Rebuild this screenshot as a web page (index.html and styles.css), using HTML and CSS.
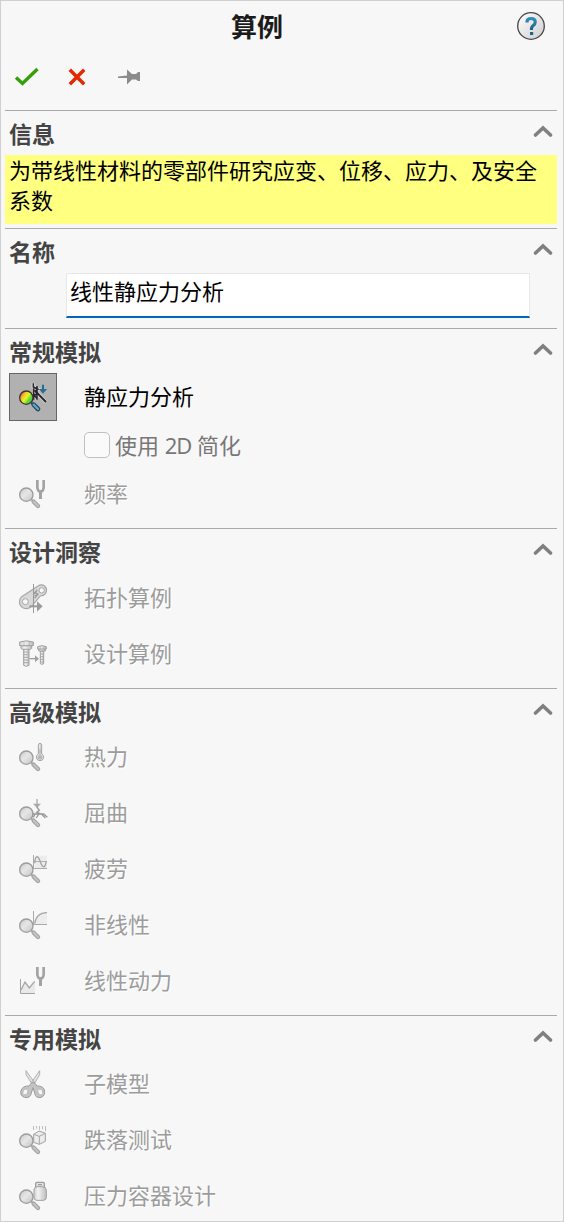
FILE: index.html
```
<!DOCTYPE html>
<html lang="zh-CN">
<head>
<meta charset="utf-8">
<title>算例</title>
<link rel="stylesheet" href="styles.css">
</head>
<body>
<svg class="defs" width="0" height="0" aria-hidden="true">
  <defs>
    <linearGradient id="glass" x1="0" y1="0" x2="1" y2="1"><stop offset="0" stop-color="#c8c8c8"/><stop offset=".45" stop-color="#e6e6e6"/><stop offset="1" stop-color="#c4c4c4"/></linearGradient>
    <linearGradient id="metal" x1="0" y1="0" x2="1" y2="0"><stop offset="0" stop-color="#d2d2d2"/><stop offset=".35" stop-color="#f2f2f2"/><stop offset="1" stop-color="#bdbdbd"/></linearGradient>
    <linearGradient id="rainbow" x1="0" y1=".15" x2="1" y2=".85"><stop offset=".05" stop-color="#f0503c"/><stop offset=".3" stop-color="#f5c62a"/><stop offset=".5" stop-color="#e6f52a"/><stop offset=".7" stop-color="#62dc2c"/><stop offset="1" stop-color="#2aa6a0"/></linearGradient>
    <linearGradient id="helpfill" x1="0" y1="0" x2="1" y2="1"><stop offset="0" stop-color="#fff"/><stop offset="1" stop-color="#cdcdcd"/></linearGradient>
    <linearGradient id="helpmark" x1="0" y1="0" x2="0" y2="1"><stop offset="0" stop-color="#2f8fbd"/><stop offset="1" stop-color="#1d5f80"/></linearGradient>
    <g id="magnifier">
      <path d="M37 59l6 6" stroke="#a0a0a0" stroke-width="6"/>
      <path d="M44 65L57 78" stroke="#a0a0a0" stroke-width="13" stroke-linecap="round"/>
      <path d="M44 65L57 78" stroke="#c2c2c2" stroke-width="7" stroke-linecap="round"/>
      <circle cx="22" cy="44" r="20" fill="url(#glass)" stroke="#9c9c9c" stroke-width="4"/>
    </g>
    <g id="fork" fill="none" stroke="#a3a3a3"><path d="M55 0V20Q55 34 64.500 34Q74 34 74 20V0" stroke-width="8"/><path d="M64.500 30V57" stroke-width="9"/></g>
    <symbol id="chevron" viewBox="0 0 20 14"><path d="M2.500 11L10 4L17.500 11" fill="none" stroke="#808080" stroke-width="3.600" stroke-linecap="round"/></symbol>
  </defs>
</svg>

<main class="panel">
  <header class="titlebar">
    <h1 class="title">算例</h1>
    <svg class="help" viewBox="0 0 28 28"><circle cx="14" cy="14" r="13.300" fill="url(#helpfill)" stroke="#454545" stroke-width="1.300"/><path d="M10 10.500V9.700Q10 6.500 14 6.500Q18.300 6.500 18.300 10Q18.300 12 16 13.800Q14.500 15 14.500 16.500V18" fill="none" stroke="url(#helpmark)" stroke-width="3.100"/><path d="M13 20h3.200v3H13z" fill="#1d6488"/></svg>
  </header>

  <div class="toolbar">
    <svg class="ok" viewBox="0 0 26 20"><path d="M2 10.500L8.500 16.500L23.500 2" fill="none" stroke="#36a00c" stroke-width="3.400"/></svg>
    <svg class="cancel" viewBox="0 0 18 18"><path d="M1.800 1.800L16.200 16.200M16.200 1.800L1.800 16.200" stroke="#e22900" stroke-width="3.500"/></svg>
    <svg class="pin" viewBox="0 0 22 16"><path d="M0 7.500L9 6.500V0.500L14 5H18L20 3H22V12H20L18 10.500H14L9 15.500V9H0z" fill="#8b8b8b"/></svg>
  </div>

  <section class="group group-info">
    <div class="group-head"><h2>信息</h2><svg class="chev"><use href="#chevron"/></svg></div>
    <p class="message">为带线性材料的零部件研究应变、位移、应力、及安全系数</p>
  </section>

  <section class="group group-name">
    <div class="group-head"><h2>名称</h2><svg class="chev"><use href="#chevron"/></svg></div>
    <div class="name-field">线性静应力分析</div>
  </section>

  <section class="group group-general">
    <div class="group-head"><h2>常规模拟</h2><svg class="chev"><use href="#chevron"/></svg></div>
    <div class="row active">
      <span class="icon-cell selected"><svg class="icon" viewBox="0 0 84 87">
        <path d="M43 1V12L57 19L48 23L56 33L44 35L55 48M52 27L81 57" fill="none" stroke="#d8d8d8" stroke-width="11"/>
        <path d="M43 1V12L57 19L48 23L56 33L44 35L55 48M44 16V50M54 9V50" fill="none" stroke="#29242c" stroke-width="4.500"/>
        <path d="M50 25L81 57" stroke="#29242c" stroke-width="6"/>
        <path d="M72 5V19" stroke="#286d92" stroke-width="6"/><path d="M60 18H84L72 32z" fill="#286d92"/>
        <path d="M37 59l6 6" stroke="#333" stroke-width="6"/>
        <path d="M44 65L57 78" stroke="#24465a" stroke-width="14" stroke-linecap="round"/><path d="M44 65L57 78" stroke="#5ea6c8" stroke-width="7" stroke-linecap="round"/>
        <circle cx="22" cy="44" r="20" fill="url(#rainbow)" stroke="#3d3534" stroke-width="4"/>
      </svg></span>
      <span class="label">静应力分析</span>
    </div>
    <div class="option"><span class="checkbox"></span><span class="option-label">使用 <span class="latin">2D</span> 简化</span></div>
    <div class="row">
      <span class="icon-cell"><svg class="icon" viewBox="0 0 84 87"><use href="#magnifier"/><use href="#fork"/></svg></span>
      <span class="label">频率</span>
    </div>
  </section>

  <section class="group group-insight">
    <div class="group-head"><h2>设计洞察</h2><svg class="chev"><use href="#chevron"/></svg></div>
    <div class="row tall">
      <span class="icon-cell"><svg class="icon" viewBox="0 0 84 87">
        <path d="M8 38L57 6Q67 -1 77 6Q87 17 79 29Q74 36 64 36L38 67Q28 77 13 72Q-1 65 2 49Q3 42 8 38z" fill="#d8d8d8" stroke="#a6a6a6" stroke-width="3.500"/>
        <circle cx="19" cy="53" r="9" fill="#f7f7f7" stroke="#a6a6a6" stroke-width="3"/>
        <circle cx="68" cy="19" r="8" fill="#f7f7f7" stroke="#a6a6a6" stroke-width="3"/>
        <path d="M44 30L55 18M47 42L58 29M49 26L56 31M47 34L53 35" fill="none" stroke="#999" stroke-width="4"/>
        <path d="M43.500 0V87" stroke="#999" stroke-width="3"/><path d="M31 67H56" stroke="#9b9b9b" stroke-width="6"/><path d="M54 52L71 67L54 83z" fill="#9b9b9b"/>
      </svg></span>
      <span class="label">拓扑算例</span>
    </div>
    <div class="row">
      <span class="icon-cell"><svg class="icon" viewBox="0 0 84 87">
        <g fill="url(#metal)" stroke="#a0a0a0" stroke-width="3">
          <path d="M14 25H30V76Q22 82 14 76z"/><path d="M6 17H38V25L34 28H10L6 25z"/><path d="M2 6Q22 -1 43 6V17H2z"/>
          <path d="M64 33H74V71Q69 75 64 71z"/><path d="M59 26H79V33H59z"/><path d="M56 20Q69 14 82 20V27H56z"/>
        </g>
        <path d="M15 36H29M15 44H29M15 52H29M15 60H29M15 68H29M64 42H74M64 50H74M64 58H74M64 66H74" stroke="#a8a8a8" stroke-width="3"/>
        <path d="M15 4V17M31 4V17M64 18V27M75 18V27" stroke="#aaa" stroke-width="2"/>
        <path d="M32 56H50" stroke="#a0a0a0" stroke-width="4"/><path d="M48 46L60 56L48 67z" fill="#a0a0a0"/>
      </svg></span>
      <span class="label">设计算例</span>
    </div>
  </section>

  <section class="group group-advanced">
    <div class="group-head"><h2>高级模拟</h2><svg class="chev"><use href="#chevron"/></svg></div>
    <div class="row">
      <span class="icon-cell"><svg class="icon" viewBox="0 0 84 87"><use href="#magnifier"/>
        <path d="M58 33V7Q58 1 63 1Q68 1 68 7V33Q74 36 74 43Q73 53 63 53Q53 53 52 43Q52 36 58 33z" fill="#e6e6e6" stroke="#a3a3a3" stroke-width="3"/><path d="M63 18V36" stroke="#a6a6a6" stroke-width="3"/><circle cx="63" cy="43" r="7" fill="#b8b8b8"/><path d="M63 7H68M63 13H68M64 19H68M64 25H68" stroke="#aaa" stroke-width="2"/>
      </svg></span>
      <span class="label">热力</span>
    </div>
    <div class="row">
      <span class="icon-cell"><svg class="icon" viewBox="0 0 84 87"><use href="#magnifier"/>
        <path d="M54 0V15" stroke="#aaa" stroke-width="4"/><path d="M42 14H66L54 27z" fill="#aaa"/>
        <path d="M54 24L61 34L53 40L64 44M39 45H74L85 55M49 43L43 55M60 44L52 57M68 46L79 57" fill="none" stroke="#999" stroke-width="4"/>
      </svg></span>
      <span class="label">屈曲</span>
    </div>
    <div class="row">
      <span class="icon-cell"><svg class="icon" viewBox="0 0 84 87">
        <path d="M48 2H84V40H48z" fill="#ececec"/><path d="M43.500 0V40.500H84" fill="none" stroke="#aaa" stroke-width="3"/><path d="M48 19.500H84" stroke="#a6a6a6" stroke-width="2.500"/><path d="M47 25C48 4 55 -2 62 15C69 37 77 45 82 19" fill="none" stroke="#a2a2a2" stroke-width="4"/><use href="#magnifier"/>
      </svg></span>
      <span class="label">疲劳</span>
    </div>
    <div class="row">
      <span class="icon-cell"><svg class="icon" viewBox="0 0 84 87">
        <path d="M48 38Q52 6 84 5V40H48z" fill="#ededed"/><path d="M43.500 0V40.500H84" fill="none" stroke="#aaa" stroke-width="3"/><path d="M47 38Q51 6 84 5" fill="none" stroke="#a8a8a8" stroke-width="4"/><use href="#magnifier"/>
      </svg></span>
      <span class="label">非线性</span>
    </div>
    <div class="row">
      <span class="icon-cell"><svg class="icon" viewBox="0 0 84 87"><path d="M5 70L18 46L31 63L48 43V79H5z" fill="#e9e9e9"/><path d="M4.500 36V79.500H48" fill="none" stroke="#a3a3a3" stroke-width="3"/><path d="M6 69L18 45L31 63L47 43" fill="none" stroke="#a6a6a6" stroke-width="4"/><use href="#fork"/></svg></span>
      <span class="label">线性动力</span>
    </div>
  </section>

  <section class="group group-special">
    <div class="group-head"><h2>专用模拟</h2><svg class="chev"><use href="#chevron"/></svg></div>
    <div class="row">
      <span class="icon-cell"><svg class="icon" viewBox="0 0 84 87">
        <path d="M21 2L21 14L40 43L47 38zM62 2L62 14L45 43L37 38z" fill="#e4e4e4" stroke="#a3a3a3" stroke-width="2.500"/>
        <path d="M38 38H46L54 48Q71 47 76 59Q80 76 67 82Q49 86 47 69L42 53L37 69Q34 86 16 82Q2 77 6 61Q12 47 30 48z" fill="#c4c4c4" stroke="#9c9c9c" stroke-width="3"/>
        <ellipse cx="19" cy="66" rx="7" ry="9" fill="#f7f7f7" stroke="#aaa" stroke-width="2" transform="rotate(25 19 66)"/><ellipse cx="64" cy="66" rx="7" ry="9" fill="#f7f7f7" stroke="#aaa" stroke-width="2" transform="rotate(-25 64 66)"/>
      </svg></span>
      <span class="label">子模型</span>
    </div>
    <div class="row">
      <span class="icon-cell"><svg class="icon" viewBox="0 0 84 87">
        <path d="M43.500 0V12M52.500 0V8M61.500 0V11M70.500 0V10M79.500 0V16" stroke="#b0b0b0" stroke-width="2.500"/>
        <path d="M44 25L60 15L79 22V46L61 55L44 49z" fill="#ececec" stroke="#a0a0a0" stroke-width="3"/><path d="M44 25L61 31L79 22M61 31V55" fill="none" stroke="#a6a6a6" stroke-width="3"/><use href="#magnifier"/>
      </svg></span>
      <span class="label">跌落测试</span>
    </div>
    <div class="row">
      <span class="icon-cell"><svg class="icon" viewBox="0 0 84 87">
        <path d="M50 17V4Q50 1 54 1H72Q76 1 76 4V17" fill="#e2e2e2" stroke="#9e9e9e" stroke-width="4"/><path d="M57 8H69" stroke="#9e9e9e" stroke-width="4"/>
        <path d="M45 22Q47 14 56 14H70Q82 15 82 25V47Q82 54 73 55H53Q45 54 45 48z" fill="url(#metal)" stroke="#9e9e9e" stroke-width="3"/><use href="#magnifier"/>
      </svg></span>
      <span class="label">压力容器设计</span>
    </div>
  </section>
</main>
</body>
</html>
```

FILE: styles.css
```
* { box-sizing: border-box; }

body {
  margin: 0;
  background: #f7f7f7;
  color: #000;
  font: 22px/30px "Noto Sans", "Noto Sans CJK SC", sans-serif;
}

.defs { display: block; height: 0; }

.panel {
  height: 1222px;
  padding: 0 6px 0 4px;
  border: 1px solid #d0d0d0;
  overflow: hidden;
}

.titlebar {
  display: grid;
  grid-template-columns: 1fr 40px;
  height: 52px;
}

.title {
  margin: 7px 0 0;
  padding: 0 48px 0 40px;
  text-align: center;
  font: bold 26px/36px "Noto Sans CJK SC", sans-serif;
  color: #1b1b1b;
}

.help { width: 28px; height: 28px; margin-top: 11px; }

.toolbar {
  display: flex;
  align-items: center;
  height: 57px;
  padding-left: 9px;
  padding-bottom: 9px;
}

.ok { width: 26px; height: 20px; }
.cancel { width: 18px; height: 18px; margin-left: 28px; }
.pin { width: 22px; height: 16px; margin-left: 32px; }

.group { border-top: 1px solid #a9a9a9; }
.group-info { height: 118px; }
.group-name { height: 100px; }
.group-general { height: 200px; }
.group-insight { height: 160px; }
.group-advanced { height: 327px; }

.group-head {
  display: flex;
  justify-content: space-between;
  height: 40px;
  padding: 0 4px;
}

.group-head h2 {
  margin: 6px 0 0;
  font: bold 23px/32px "Noto Sans CJK SC", sans-serif;
  color: #444;
}

.chev { width: 20px; height: 14px; margin-top: 13px; }

.message {
  height: 69px;
  margin: 4px 0 0;
  padding: 0 4px;
  background: #ffff80;
}

.name-field {
  width: 464px;
  height: 45px;
  margin: 4px 0 0 61px;
  padding: 2px 3px;
  background: #fff;
  border: 1px solid #e8e8e8;
  border-bottom: 2px solid #0067c0;
}

.row {
  display: flex;
  align-items: center;
  height: 56px;
  padding-left: 4px;
}

.row.tall { height: 57px; }

.icon-cell {
  display: flex;
  width: 48px;
  height: 48px;
  margin-right: 27px;
  padding: 10px 0 0 10px;
}

.icon-cell.selected {
  padding: 9px 0 0 9px;
  background: #b1b1b1;
  border: 1px solid #666;
}

.icon { width: 28px; height: 29px; overflow: visible; }

.label {
  padding-bottom: 2px;
  color: #9c9c9c;
  text-shadow: 1px 1px 0 #fff;
}

.row.active .label { color: #000; text-shadow: none; }

.option {
  display: flex;
  align-items: center;
  height: 41px;
  padding-left: 79px;
  padding-bottom: 2px;
}

.checkbox {
  width: 26px;
  height: 26px;
  margin-right: 5px;
  border: 1px solid #c0c0c0;
  border-radius: 5px;
  background: #fafafa;
}

.option-label { color: #777; }

.latin { letter-spacing: -1px; }
```
